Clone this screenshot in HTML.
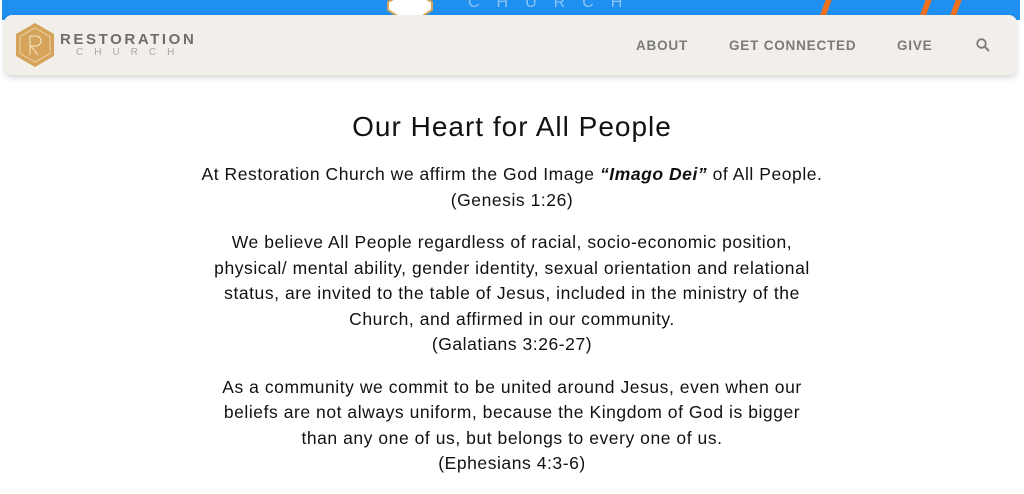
<!DOCTYPE html>
<html><head><meta charset="utf-8">
<style>
*{margin:0;padding:0;box-sizing:border-box}
body{width:1024px;height:462px;overflow:hidden;background:#fff;font-family:"Liberation Sans",sans-serif;position:relative}
.banner{position:absolute;left:2px;top:0;width:1018px;height:20px;background:#1f8ff0}
.nav{position:absolute;left:4px;top:15px;width:1013px;height:60px;background:#f2eee9;border-radius:8px;box-shadow:0 3px 6px rgba(0,0,0,.15)}
.menu a{position:absolute;top:23px;font-weight:bold;font-size:13.5px;letter-spacing:.8px;color:#7b7b7b}
.content{position:absolute;top:111px;left:0;width:1024px;text-align:center;color:#111}
h1{font-weight:normal;font-size:28px;letter-spacing:1px;margin-bottom:19px}
p{font-size:17.5px;letter-spacing:.55px;line-height:25.5px;margin-bottom:17px}
</style></head><body>
<div class="banner">
 <svg style="position:absolute;left:378px;top:-10px" width="60" height="26"><polygon points="30,0 52,12 52,20 30,34 8,20 8,12" fill="#fff" stroke="#d5a45a" stroke-width="2"/></svg>
 <div style="position:absolute;left:466px;top:-6px;color:#8cc4f5;font-size:16px;letter-spacing:17px">CHURCH</div>
 <div style="position:absolute;left:820px;top:0;width:6px;height:20px;background:#f0701e;transform:skewX(-20deg)"></div>
 <div style="position:absolute;left:920px;top:0;width:6px;height:20px;background:#f0701e;transform:skewX(-20deg)"></div>
 <div style="position:absolute;left:950px;top:0;width:6px;height:20px;background:#f0701e;transform:skewX(-20deg)"></div>
</div>
<div class="nav">
 <svg style="position:absolute;left:11px;top:7px" width="40" height="46"><polygon points="20,1 39,12 39,34 20,45 1,34 1,12" fill="#d5a45a"/><polygon points="20,6 35,14.5 35,31.5 20,40 5,31.5 5,14.5" fill="none" stroke="#f0d9b0" stroke-width=".8"/><path d="M15,33V14h6a5,5 0 0 1 0,10h-5l7,9" fill="none" stroke="#f5e6c8" stroke-width="1"/></svg>
 <div style="position:absolute;left:56px;top:16px;font-weight:bold;font-size:15px;letter-spacing:2.6px;color:#6e6e6e">RESTORATION</div>
 <div style="position:absolute;left:72px;top:32px;font-size:10px;letter-spacing:11px;color:#aaa">CHURCH</div>
 <div class="menu">
  <a style="left:632px">ABOUT</a>
  <a style="left:725px">GET CONNECTED</a>
  <a style="left:893px">GIVE</a>
 </div>
 <svg style="position:absolute;left:972px;top:23px" width="14" height="14"><circle cx="5.5" cy="5.5" r="4.3" fill="none" stroke="#7b7b7b" stroke-width="1.8"/><path d="M8.7,8.7L13,13" stroke="#7b7b7b" stroke-width="2"/></svg>
</div>
<div class="content">
 <h1>Our Heart for All People</h1>
 <p>At Restoration Church we affirm the God Image <b><i>“Imago Dei”</i></b> of All People.<br>(Genesis 1:26)</p>
 <p>We believe All People regardless of racial, socio-economic position,<br>physical/ mental ability, gender identity, sexual orientation and relational<br>status, are invited to the table of Jesus, included in the ministry of the<br>Church, and affirmed in our community.<br>(Galatians 3:26-27)</p>
 <p>As a community we commit to be united around Jesus, even when our<br>beliefs are not always uniform, because the Kingdom of God is bigger<br>than any one of us, but belongs to every one of us.<br>(Ephesians 4:3-6)</p>
</div>
</body></html>
